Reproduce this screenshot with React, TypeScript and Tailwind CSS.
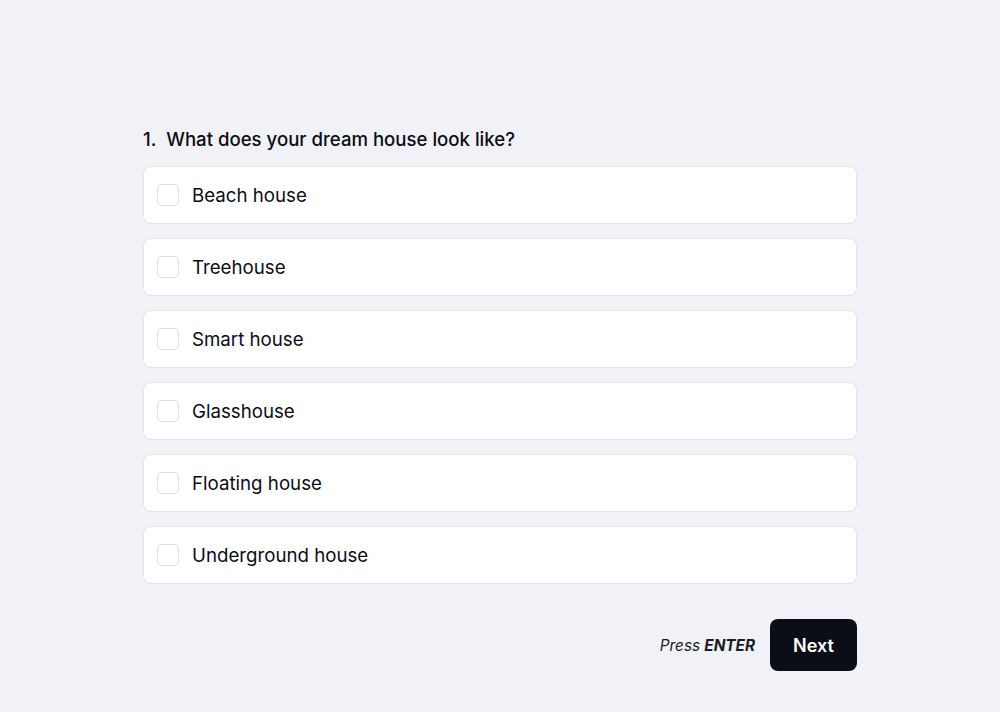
const options = [
  "Beach house",
  "Treehouse",
  "Smart house",
  "Glasshouse",
  "Floating house",
  "Underground house",
];

export default function App() {
  return (
    <div
      className="min-h-[712px] w-full bg-[#f1f2f7] pt-[125px]"
      style={{ fontFamily: "Inter, 'Noto Sans', sans-serif" }}
    >
      <div className="mx-auto w-[714px]">
        <h1 className="mb-[13px] text-[18.6px] leading-[28px] font-medium text-[#0b0d17]">
          1.&nbsp; What does your dream house look like?
        </h1>
        <div className="flex flex-col gap-[14px]">
          {options.map((opt) => (
            <label
              key={opt}
              className="flex h-[58px] items-center gap-[13px] rounded-lg border border-[#e2e4ea] bg-white px-[13px]"
            >
              <span className="h-[22px] w-[22px] rounded-[5px] border border-[#dcdfe5] bg-white" />
              <span className="pt-[2px] text-[18.7px] text-[#0b0d17]">{opt}</span>
            </label>
          ))}
        </div>
        <div className="mt-[35px] flex items-center justify-end gap-[15px]">
          <span className="pt-[2px] text-[15.3px] italic text-[#1a1c25]">
            Press <b className="font-bold">ENTER</b>
          </span>
          <button className="h-[52px] w-[87px] rounded-lg bg-[#0b0d17] text-[18px] font-semibold text-white">
            Next
          </button>
        </div>
      </div>
    </div>
  );
}
